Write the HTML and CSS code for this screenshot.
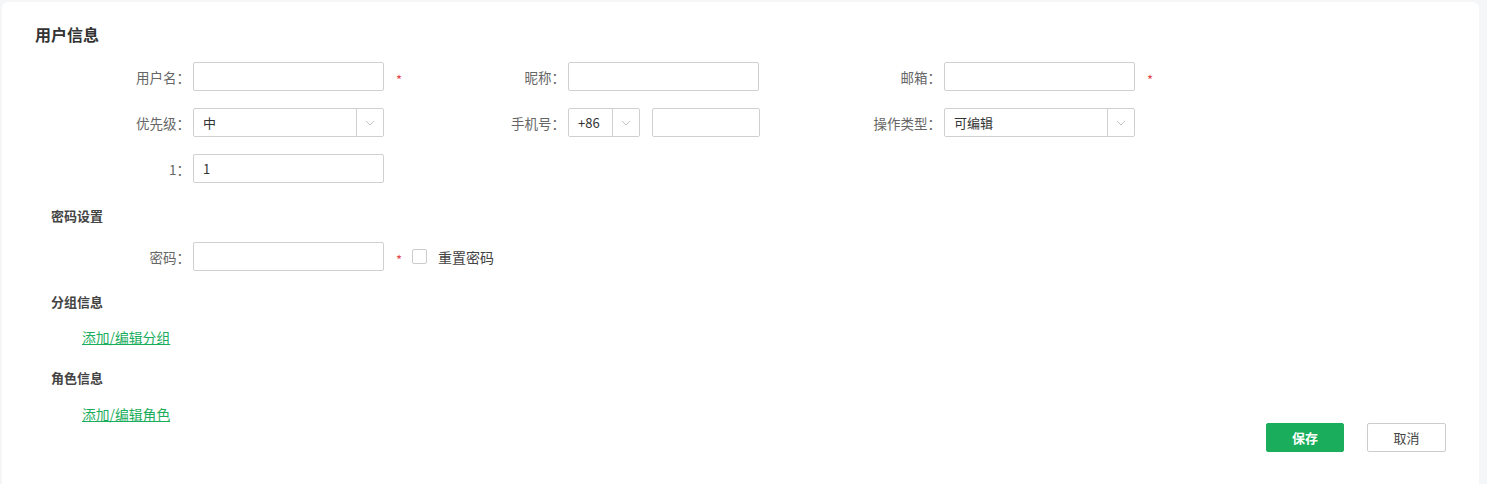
FILE: index.html
```html
<!DOCTYPE html>
<html lang="zh-CN">
  <head>
    <meta charset="UTF-8" />
    <meta name="viewport" content="width=device-width, initial-scale=1.0" />
    <title>用户信息</title>
    <link rel="stylesheet" href="styles.css">
  </head>
  <body>
    <div class="card">
      <h2 class="card-title">用户信息</h2>

      <div class="field-grid">
        <div class="field">
          <label class="field-label">用户名：</label>
          <input class="text-input" type="text" />
          <span class="required">*</span>
        </div>
        <div class="field">
          <label class="field-label">昵称：</label>
          <input class="text-input" type="text" />
        </div>
        <div class="field">
          <label class="field-label">邮箱：</label>
          <input class="text-input" type="text" />
          <span class="required">*</span>
        </div>

        <div class="field">
          <label class="field-label">优先级：</label>
          <div class="select">
            <span class="select-value">中</span>
            <span class="select-arrow">
              <svg width="10" height="6" viewBox="0 0 10 6"><path d="M1 1l4 4 4-4" fill="none" stroke="#c4c4c4" stroke-width="1"/></svg>
            </span>
          </div>
        </div>
        <div class="field">
          <label class="field-label">手机号：</label>
          <div class="select select-code">
            <span class="select-value">+86</span>
            <span class="select-arrow">
              <svg width="10" height="6" viewBox="0 0 10 6"><path d="M1 1l4 4 4-4" fill="none" stroke="#c4c4c4" stroke-width="1"/></svg>
            </span>
          </div>
          <input class="text-input phone-input" type="text" />
        </div>
        <div class="field">
          <label class="field-label">操作类型：</label>
          <div class="select">
            <span class="select-value">可编辑</span>
            <span class="select-arrow">
              <svg width="10" height="6" viewBox="0 0 10 6"><path d="M1 1l4 4 4-4" fill="none" stroke="#c4c4c4" stroke-width="1"/></svg>
            </span>
          </div>
        </div>

        <div class="field">
          <label class="field-label">1：</label>
          <input class="text-input" type="text" value="1" />
        </div>
      </div>

      <h3 class="section-title section-password">密码设置</h3>
      <div class="field-grid">
        <div class="field field-wide">
          <label class="field-label">密码：</label>
          <input class="text-input" type="password" />
          <span class="required">*</span>
          <label class="checkbox">
            <span class="checkbox-box"></span>
            <span class="checkbox-text">重置密码</span>
          </label>
        </div>
      </div>

      <h3 class="section-title section-group">分组信息</h3>
      <a class="edit-link" href="#">添加/编辑分组</a>

      <h3 class="section-title section-role">角色信息</h3>
      <a class="edit-link" href="#">添加/编辑角色</a>

      <div class="actions">
        <button class="btn btn-primary" type="button">保存</button>
        <button class="btn btn-default" type="button">取消</button>
      </div>
    </div>
  </body>
</html>
```

FILE: styles.css
```css
* {
  box-sizing: border-box;
}

body {
  margin: 0;
  padding: 2px 8px 0 2px;
  background: #f5f6f8;
  font-family: "Noto Sans CJK SC", "Noto Sans", sans-serif;
  font-size: 13px;
  color: #666;
  height: 100vh;
  overflow: hidden;
}

.card {
  background: #fff;
  border-radius: 6px 6px 0 0;
  padding: 22px 33px 0 33px;
  height: calc(100vh - 2px);
}

.card-title {
  margin: 0 0 18px;
  font-size: 16px;
  line-height: 20px;
  font-weight: bold;
  color: #333;
}

.field-grid {
  display: grid;
  grid-template-columns: 375px 376px 375px;
  row-gap: 17px;
  margin-left: 16px;
}

.field {
  display: flex;
  align-items: center;
  height: 29px;
}

.field-wide {
  grid-column: span 3;
}

.field-label {
  width: 142px;
  padding-right: 3px;
  text-align: right;
  font-size: 13.5px;
  color: #666;
  white-space: nowrap;
}

.text-input {
  width: 191px;
  height: 29px;
  padding: 0 9px;
  border: 1px solid #d0d0d0;
  border-radius: 2px;
  font: inherit;
  color: #333;
  outline: none;
}

.phone-input {
  width: 108px;
  margin-left: 12px;
}

.required {
  margin-left: 12px;
  padding-top: 5px;
  color: #e5484d;
  font-size: 13px;
}

.select {
  display: flex;
  width: 191px;
  height: 29px;
  border: 1px solid #d0d0d0;
  border-radius: 2px;
  color: #333;
}

.select-code {
  width: 72px;
}

.select-value {
  flex: 1;
  padding-left: 9px;
  line-height: 27px;
}

.select-arrow {
  display: flex;
  align-items: center;
  justify-content: center;
  width: 27px;
  border-left: 1px solid #d0d0d0;
}

.section-title {
  margin: 0 0 0 16px;
  font-size: 13px;
  line-height: 20px;
  font-weight: bold;
  color: #444;
}

.section-password {
  margin-top: 23px;
  margin-bottom: 16px;
}

.section-group {
  margin-top: 21px;
  margin-bottom: 15px;
}

.section-role {
  margin-top: 21px;
  margin-bottom: 16px;
}

.edit-link {
  display: block;
  width: max-content;
  margin-left: 47px;
  line-height: 20px;
  font-size: 13.8px;
  color: #1aad5c;
  text-decoration: underline;
}

.checkbox {
  display: flex;
  align-items: center;
  margin-left: 10px;
}

.checkbox-box {
  width: 15px;
  height: 15px;
  border: 1px solid #ccc;
  border-radius: 2px;
}

.checkbox-text {
  margin-left: 11px;
  font-size: 14px;
  color: #444;
}

.actions {
  display: flex;
  justify-content: flex-end;
  gap: 23px;
  margin-top: -1px;
}

.btn {
  height: 29px;
  border-radius: 2px;
  font: inherit;
  cursor: pointer;
}

.btn-primary {
  width: 78px;
  border: 1px solid #1aae5c;
  background: #1aae5c;
  color: #fff;
  font-weight: bold;
}

.btn-default {
  width: 79px;
  border: 1px solid #ccc;
  background: #fff;
  color: #444;
}
```
